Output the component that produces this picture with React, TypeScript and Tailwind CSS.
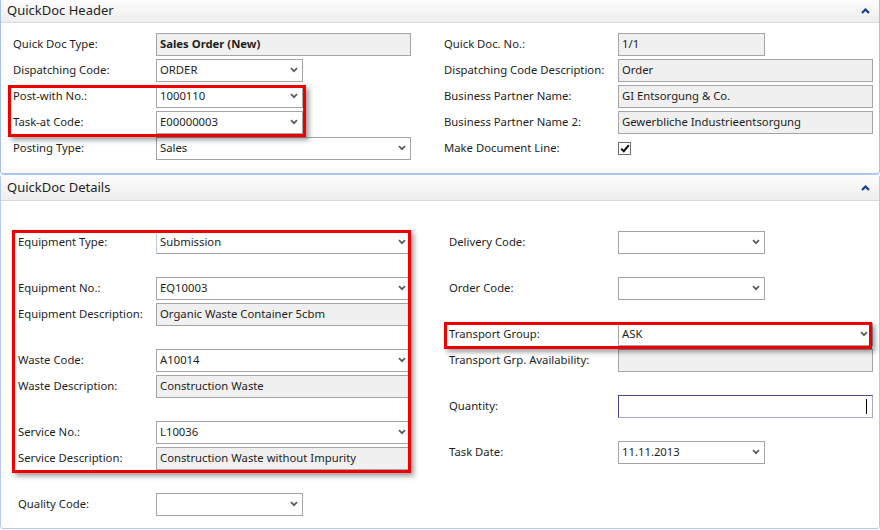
import React from "react";

type FieldKind = "select" | "gray" | "text" | "check" | "focus";

type FieldProps = {
  kind: FieldKind;
  value?: string;
  width?: string;
  bold?: boolean;
  className?: string;
};

function ChevronDown() {
  return (
    <svg width="8" height="6" viewBox="0 0 8 6" className="shrink-0">
      <path d="M1 1.2 L4 4.2 L7 1.2" fill="none" stroke="#5a5a5a" strokeWidth="1.7" />
    </svg>
  );
}

function ChevronUp() {
  return (
    <svg width="9" height="6" viewBox="0 0 9 6">
      <path d="M1 5 L4.5 1.5 L8 5" fill="none" stroke="#1a3d93" strokeWidth="2.2" />
    </svg>
  );
}

function Field({ kind, value = "", width = "w-[147px]", bold, className = "" }: FieldProps) {
  if (kind === "check") {
    return (
      <div className="w-[13px] h-[13px] border border-[#6f6f6f] bg-white flex items-center justify-center">
        <svg width="10" height="9" viewBox="0 0 10 9">
          <path d="M1.2 4.6 L3.8 7.2 L8.8 1.2" fill="none" stroke="#111" strokeWidth="2" />
        </svg>
      </div>
    );
  }
  const bg = kind === "gray" ? "bg-[#f0f0f0]" : "bg-white";
  const border =
    kind === "focus"
      ? "border-[#a8a8b8] border-t-[#4a4680] border-l-[#4a4680]"
      : "border-[#a5a5a5]";
  return (
    <div
      className={`${width} h-[23px] border ${border} ${bg} flex items-center pl-[3px] pr-[4px] ${className}`}
    >
      <span className={`flex-1 truncate ${bold ? "font-bold" : ""}`}>{value}</span>
      {kind === "select" && <ChevronDown />}
      {kind === "focus" && <span className="w-px h-[15px] bg-black mr-[1px]" />}
    </div>
  );
}

type RowProps = {
  label: string;
  labelWidth: string;
  children: React.ReactNode;
};

function Row({ label, labelWidth, children }: RowProps) {
  return (
    <div className="flex items-center h-[26px]">
      <div className={`${labelWidth} shrink-0`}>{label}</div>
      {children}
    </div>
  );
}

function Spacer() {
  return <div className="h-[20px]" />;
}

function RedBox({ className }: { className: string }) {
  return (
    <div
      className={`absolute border-[3px] border-[#ee0000] shadow-[3px_3px_5px_rgba(0,0,0,0.38)] pointer-events-none ${className}`}
    />
  );
}

function SectionHeader({ title, height }: { title: string; height: string }) {
  return (
    <div
      className={`${height} flex items-center justify-between pl-[6px] pr-[9px] border-b border-[#d9d9d9] bg-gradient-to-b from-[#fcfcfc] to-[#eeeeee]`}
    >
      <span className="text-[13px] text-[#1e1e1e]">{title}</span>
      <ChevronUp />
    </div>
  );
}

export default function App() {
  const L1 = "w-[143px]";
  const R1 = "w-[174px]";
  const L2 = "w-[138px]";
  const R2 = "w-[169px]";
  const LONG = "w-[255px]";

  return (
    <div className="w-[880px] h-[530px] bg-white overflow-hidden font-['Noto_Sans',sans-serif] text-[11.3px] text-[#1e1e1e]">
      {/* QuickDoc Header */}
      <section className="h-[174px] border-x border-b border-[#a7c2ea] rounded-b-[3px]">
        <SectionHeader title="QuickDoc Header" height="h-[23px]" />
        <div className="flex pt-[8px] pb-[12px]">
          <div className="w-[431px] ml-[12px] flex flex-col">
            <Row label="Quick Doc Type:" labelWidth={L1}>
              <Field kind="gray" value="Sales Order (New)" width={LONG} bold />
            </Row>
            <Row label="Dispatching Code:" labelWidth={L1}>
              <Field kind="select" value="ORDER" />
            </Row>
            <div className="relative">
              <Row label="Post-with No.:" labelWidth={L1}>
                <Field kind="select" value="1000110" />
              </Row>
              <Row label="Task-at Code:" labelWidth={L1}>
                <Field kind="select" value="E00000003" />
              </Row>
              <RedBox className="-left-[5px] top-[2px] w-[298px] h-[52px]" />
            </div>
            <Row label="Posting Type:" labelWidth={L1}>
              <Field kind="select" value="Sales" width={LONG} />
            </Row>
          </div>
          <div className="flex flex-col">
            <Row label="Quick Doc. No.:" labelWidth={R1}>
              <Field kind="gray" value="1/1" />
            </Row>
            <Row label="Dispatching Code Description:" labelWidth={R1}>
              <Field kind="gray" value="Order" width={LONG} />
            </Row>
            <Row label="Business Partner Name:" labelWidth={R1}>
              <Field kind="gray" value="GI Entsorgung & Co." width={LONG} />
            </Row>
            <Row label="Business Partner Name 2:" labelWidth={R1}>
              <Field kind="gray" value="Gewerbliche Industrieentsorgung" width={LONG} />
            </Row>
            <Row label="Make Document Line:" labelWidth={R1}>
              <Field kind="check" />
            </Row>
          </div>
        </div>
      </section>

      {/* QuickDoc Details */}
      <section className="h-[355px] border border-[#b3cbee] rounded-[3px]">
        <SectionHeader title="QuickDoc Details" height="h-[26px]" />
        <div className="flex pt-[28px]">
          <div className="w-[431px] ml-[17px] flex flex-col">
            <div className="relative">
              <Row label="Equipment Type:" labelWidth={L2}>
                <Field
                  kind="select"
                  value="Submission"
                  width={LONG}
                  className="border-t-white border-l-[#b5cde6]"
                />
              </Row>
              <Spacer />
              <Row label="Equipment No.:" labelWidth={L2}>
                <Field kind="select" value="EQ10003" width={LONG} />
              </Row>
              <Row label="Equipment Description:" labelWidth={L2}>
                <Field kind="gray" value="Organic Waste Container 5cbm" width={LONG} />
              </Row>
              <Spacer />
              <Row label="Waste Code:" labelWidth={L2}>
                <Field kind="select" value="A10014" width={LONG} />
              </Row>
              <Row label="Waste Description:" labelWidth={L2}>
                <Field kind="gray" value="Construction Waste" width={LONG} />
              </Row>
              <Spacer />
              <Row label="Service No.:" labelWidth={L2}>
                <Field kind="select" value="L10036" width={LONG} />
              </Row>
              <Row label="Service Description:" labelWidth={L2}>
                <Field kind="gray" value="Construction Waste without Impurity" width={LONG} />
              </Row>
              <RedBox className="-left-[6px] top-[1px] w-[399px] h-[243px]" />
            </div>
            <Spacer />
            <Row label="Quality Code:" labelWidth={L2}>
              <Field kind="select" />
            </Row>
          </div>
          <div className="flex flex-col">
            <Row label="Delivery Code:" labelWidth={R2}>
              <Field kind="select" />
            </Row>
            <Spacer />
            <Row label="Order Code:" labelWidth={R2}>
              <Field kind="select" />
            </Row>
            <Spacer />
            <div className="relative">
              <Row label="Transport Group:" labelWidth={R2}>
                <Field kind="select" value="ASK" width={LONG} />
              </Row>
              <RedBox className="-left-[5px] top-[1px] w-[428px] h-[27px]" />
            </div>
            <Row label="Transport Grp. Availability:" labelWidth={R2}>
              <Field kind="gray" width={LONG} />
            </Row>
            <Spacer />
            <Row label="Quantity:" labelWidth={R2}>
              <Field kind="focus" width={LONG} />
            </Row>
            <Spacer />
            <Row label="Task Date:" labelWidth={R2}>
              <Field kind="select" value="11.11.2013" />
            </Row>
          </div>
        </div>
      </section>
    </div>
  );
}
